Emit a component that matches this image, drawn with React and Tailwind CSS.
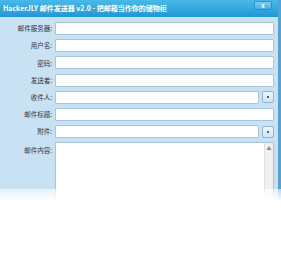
export default function App() {
  const rows = [
    { label: '邮件服务器:' },
    { label: '用户名:' },
    { label: '密码:' },
    { label: '发送者:' },
    { label: '收件人:', btn: true },
    { label: '邮件标题:' },
    { label: '附件:', btn: true },
  ];

  return (
    <div className="relative w-[281px] h-[271px] overflow-hidden bg-white" style={{ fontFamily: '"Noto Sans CJK SC", "Noto Sans", sans-serif' }}>
      <div className="flex flex-col w-[281px] h-[271px] border-r-[3px] border-[#4fa3d6]">
        {/* title bar */}
        <div className="h-[17px] flex items-center justify-between pl-[3px] pr-[6px] bg-gradient-to-b from-[#49b9ea] to-[#1f97d4]">
          <span className="text-[7px] leading-none text-white font-bold whitespace-nowrap">HackerJLY 邮件发送器 v2.0 - 把邮箱当作你的储物柜</span>
          <div className="w-[18px] h-[9px] mt-[-6px] rounded-b-[2px] bg-gradient-to-b from-[#7fcdf0] to-[#3fb0e4] border border-[#2b92c9] flex items-center justify-center">
            <span className="text-[6px] leading-none text-white font-bold">x</span>
          </div>
        </div>
        {/* body */}
        <div className="flex-1 bg-[#c8e1f3] pt-[5px] pr-[4px] flex flex-col gap-[4.2px]">
          {rows.map((r) => (
            <div key={r.label} className="flex items-center h-[13px]">
              <span className="w-[53px] text-right pr-[1px] text-[6.5px] leading-none text-[#333]">{r.label}</span>
              <div className="flex-1 flex items-center gap-[3px] ml-[2px]">
                <div className="flex-1 h-[13px] bg-white border border-[#a7c6de] rounded-[1px]" />
                {r.btn && (
                  <div className="w-[12px] h-[12px] rounded-[2px] border border-[#8fb6d6] bg-gradient-to-b from-[#eef6fc] to-[#cfe3f3] flex items-center justify-center">
                    <div className="w-[2px] h-[2px] bg-[#333] rounded-full" />
                  </div>
                )}
              </div>
            </div>
          ))}
          <div className="flex items-start flex-1">
            <span className="w-[53px] text-right pr-[1px] pt-[5px] text-[6.5px] leading-none text-[#333]">邮件内容:</span>
            <div className="flex-1 ml-[2px] h-[80px] bg-white border border-[#a7c6de] flex justify-end">
              <div className="w-[9px] bg-[#f0f0f0] border-l border-[#e0e0e0] flex justify-center pt-[2px]">
                <span className="text-[5px] leading-none text-[#888]">▲</span>
              </div>
            </div>
          </div>
        </div>
      </div>
      {/* fade-out over the lower part */}
      <div className="absolute left-0 right-0 top-[189px] bottom-0 bg-[linear-gradient(to_bottom,rgba(255,255,255,0.55),#ffffff_12px,#ffffff)]" />
    </div>
  );
}
